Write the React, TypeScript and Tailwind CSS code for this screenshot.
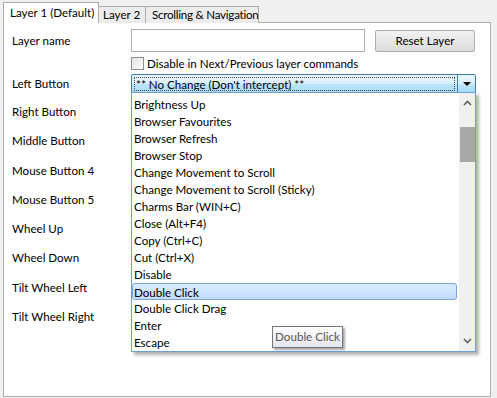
import React from 'react';

const labels = [
  'Right Button',
  'Middle Button',
  'Mouse Button 4',
  'Mouse Button 5',
  'Wheel Up',
  'Wheel Down',
  'Tilt Wheel Left',
  'Tilt Wheel Right',
];

const actions = [
  'Brightness Up',
  'Browser Favourites',
  'Browser Refresh',
  'Browser Stop',
  'Change Movement to Scroll',
  'Change Movement to Scroll (Sticky)',
  'Charms Bar (WIN+C)',
  'Close (Alt+F4)',
  'Copy (Ctrl+C)',
  'Cut (Ctrl+X)',
  'Disable',
  'Double Click',
  'Double Click Drag',
  'Enter',
  'Escape',
];

export default function App() {
  return (
    <div
      className="w-[497px] h-[398px] bg-[#f0f0f0] pl-[3px] pt-[2px] text-[11.6px] text-black overflow-hidden"
      style={{ fontFamily: 'Lato, "Liberation Sans", sans-serif' }}
    >
      {/* Tabs */}
      <div className="flex items-end h-[21px] relative z-10 whitespace-nowrap">
        <div className="h-[21px] w-[96px] bg-white border border-b-0 border-[#adadad] pl-[6px] pt-[1px] leading-[18px]">
          Layer 1 (Default)
        </div>
        <div className="h-[17px] w-[47px] bg-[#ececec] border border-l-0 border-b-0 border-[#adadad] pl-[4px] leading-[16px]">
          Layer 2
        </div>
        <div className="h-[17px] w-[113px] bg-[#ececec] border border-l-0 border-b-0 border-[#adadad] pl-[6px] leading-[16px] tracking-[-0.25px]">
          Scrolling &amp; Navigation
        </div>
      </div>

      {/* Panel */}
      <div className="relative -mt-px w-[488px] h-[375px] bg-white border border-[#adadad] pl-[8px] pt-[6px] whitespace-nowrap">
        <div className="flex items-center h-[23px]">
          <div className="w-[119px]">Layer name</div>
          <div className="w-[234px] h-[23px] border border-[#abadb3] bg-white" />
          <div className="ml-[10px] w-[100px] h-[22px] rounded-[2px] border border-[#acacac] bg-gradient-to-b from-[#f2f2f2] to-[#dcdcdc] flex items-center justify-center">
            Reset Layer
          </div>
        </div>

        <div className="flex items-center h-[13px] mt-[5px] pl-[119px]">
          <div className="w-[13px] h-[13px] border border-[#8f8f8f] bg-gradient-to-br from-[#e2e2e2] to-white" />
          <span className="ml-[3px]">Disable in Next/Previous layer commands</span>
        </div>

        <div className="flex items-center h-[27px]">
          <div className="w-[119px]">Left Button</div>
          <div className="w-[345px] h-[20px] border border-[#3c7fb1] rounded-[2px] flex bg-[linear-gradient(to_bottom,#eaf6fd_0%,#d9f0fc_50%,#bee6fd_50%,#a7d9f5_100%)]">
            <div className="flex-1 m-[2px] border border-dotted border-[#444] leading-[14px] pl-[1px] overflow-hidden">
              ** No Change (Don't intercept) **
            </div>
            <div className="w-[18px] border-l border-[#3c7fb1] flex items-center justify-center">
              <svg width="8" height="4" viewBox="0 0 8 4">
                <path d="M0 0h8L4 4z" fill="#000" />
              </svg>
            </div>
          </div>
        </div>

        {labels.map((l) => (
          <div key={l} className="flex items-center h-[29.3px]">
            {l}
          </div>
        ))}

        {/* Dropdown list */}
        <div className="absolute left-[127px] top-[69px] w-[345px] h-[260px] bg-white border border-[#6f9fd6] shadow-[3px_3px_3px_rgba(0,0,0,0.3)] flex">
          <div className="flex-1 pt-[3px] pl-px">
            {actions.map((a) => (
              <div
                key={a}
                className={`h-[17px] leading-[18px] pl-px ${
                  a === 'Double Click'
                    ? 'border border-[#7da2ce] rounded-[3px] bg-gradient-to-b from-[#dcebfc] to-[#c1dbfc] -ml-px pl-[1px] leading-[16px]'
                    : ''
                }`}
              >
                {a}
              </div>
            ))}
          </div>
          <div className="w-[16px] ml-[2px] bg-[#f0f0f0] flex flex-col items-center">
            <div className="h-[20px] flex items-center justify-center">
              <svg width="9" height="6" viewBox="0 0 9 6">
                <path d="M1 5L4.5 1.5 8 5" fill="none" stroke="#606060" strokeWidth="1.6" />
              </svg>
            </div>
            <div className="mt-[14px] w-[15px] h-[35px] bg-[#a8a8a8]" />
            <div className="flex-1" />
            <div className="h-[20px] flex items-center justify-center">
              <svg width="9" height="6" viewBox="0 0 9 6">
                <path d="M1 1L4.5 4.5 8 1" fill="none" stroke="#606060" strokeWidth="1.6" />
              </svg>
            </div>
          </div>
        </div>

        {/* Tooltip */}
        <div className="absolute left-[268px] top-[303px] h-[22px] w-[71px] border border-[#767676] bg-gradient-to-b from-white to-[#e4e5f0] shadow-[2px_2px_2px_rgba(0,0,0,0.35)] text-[#575757] flex items-center justify-center">
          Double Click
        </div>
      </div>
    </div>
  );
}
